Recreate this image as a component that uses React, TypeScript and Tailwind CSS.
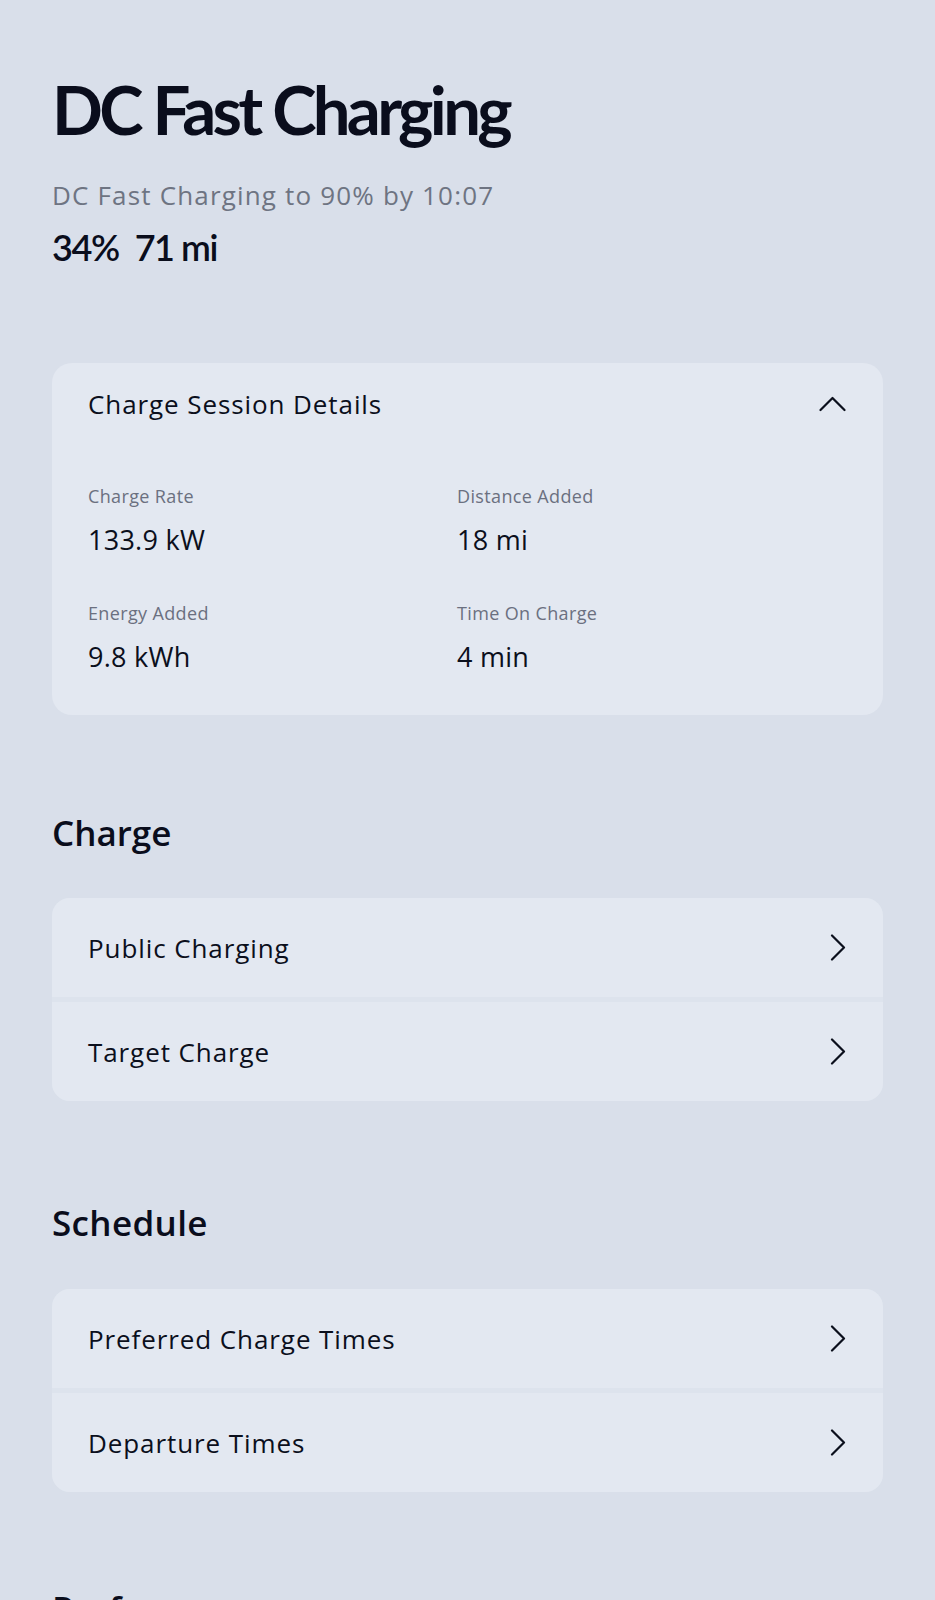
import React from "react";

const body = { fontFamily: "'Open Sans', Lato, sans-serif" };

const ChevronRight = () => (
  <svg width="16" height="27" viewBox="0 0 16 27" fill="none" className="shrink-0">
    <path d="M2 1.5 L14 13.5 L2 25.5" stroke="#0b0f1c" strokeWidth="2.2" strokeLinecap="round" strokeLinejoin="round" />
  </svg>
);

const ChevronUp = () => (
  <svg width="27" height="16" viewBox="0 0 27 16" fill="none" className="shrink-0">
    <path d="M1.5 14 L13.5 2 L25.5 14" stroke="#0b0f1c" strokeWidth="2.2" strokeLinecap="round" strokeLinejoin="round" />
  </svg>
);

const Row = ({ label, first, last }: { label: string; first?: boolean; last?: boolean }) => (
  <div
    className={`flex h-[99px] items-center justify-between bg-[#e3e8f1] pl-[36px] pr-[37px] ${first ? "rounded-t-[18px]" : ""} ${last ? "rounded-b-[18px]" : ""}`}
  >
    <span className="text-[26px] leading-none tracking-[0.035em] text-[#0b0f1c]" style={body}>
      {label}
    </span>
    <ChevronRight />
  </div>
);

const Stat = ({ label, value }: { label: string; value: string }) => (
  <div style={body}>
    <div className="text-[18px] leading-none tracking-[0.02em] text-[#6b7080]">{label}</div>
    <div className="mt-[21px] text-[27px] leading-none tracking-[0.01em] text-[#0b0f1c]">{value}</div>
  </div>
);

export default function App() {
  return (
    <div
      className="min-h-screen bg-[#d9dfea] px-[52px] pt-[76px] pb-10 overflow-hidden"
      style={{ fontFamily: "Lato, 'Open Sans', sans-serif" }}
    >
      <h1 className="text-[67px] font-bold leading-none tracking-[-0.055em] text-[#0a0d1c]">
        DC Fast Charging
      </h1>
      <p className="mt-[39px] text-[26px] leading-none tracking-[0.045em] text-[#6e7482]" style={body}>
        DC Fast Charging to 90% by 10:07
      </p>
      <div className="mt-[21px] flex gap-[16px] text-[36px] font-semibold leading-none tracking-[-0.04em] text-[#0a0d1c]">
        <span>34%</span>
        <span>71 mi</span>
      </div>

      <section className="mt-[98px] rounded-[20px] bg-[#e3e8f1] pl-[36px] pr-[37px] pt-[28px] pb-[45px]">
        <div className="flex items-center justify-between">
          <span className="text-[26px] leading-none tracking-[0.035em] text-[#0b0f1c]" style={body}>
            Charge Session Details
          </span>
          <ChevronUp />
        </div>
        <div className="mt-[70px] grid grid-cols-[369px_1fr] gap-y-[51px]">
          <Stat label="Charge Rate" value="133.9 kW" />
          <Stat label="Distance Added" value="18 mi" />
          <Stat label="Energy Added" value="9.8 kWh" />
          <Stat label="Time On Charge" value="4 min" />
        </div>
      </section>

      <h2 className="mt-[100px] text-[35px] font-semibold leading-none text-[#0a0d1c]" style={body}>
        Charge
      </h2>
      <div className="mt-[48px] flex flex-col gap-[5px] rounded-[18px] bg-[#dde3ed]">
        <Row label="Public Charging" first />
        <Row label="Target Charge" last />
      </div>

      <h2 className="mt-[104px] text-[35px] font-semibold leading-none tracking-[0.01em] text-[#0a0d1c]" style={body}>
        Schedule
      </h2>
      <div className="mt-[49px] flex flex-col gap-[5px] rounded-[18px] bg-[#dde3ed]">
        <Row label="Preferred Charge Times" first />
        <Row label="Departure Times" last />
      </div>

      <h2 className="mt-[99px] text-[35px] font-semibold leading-none text-[#0a0d1c]" style={body}>
        Preferences
      </h2>
    </div>
  );
}
